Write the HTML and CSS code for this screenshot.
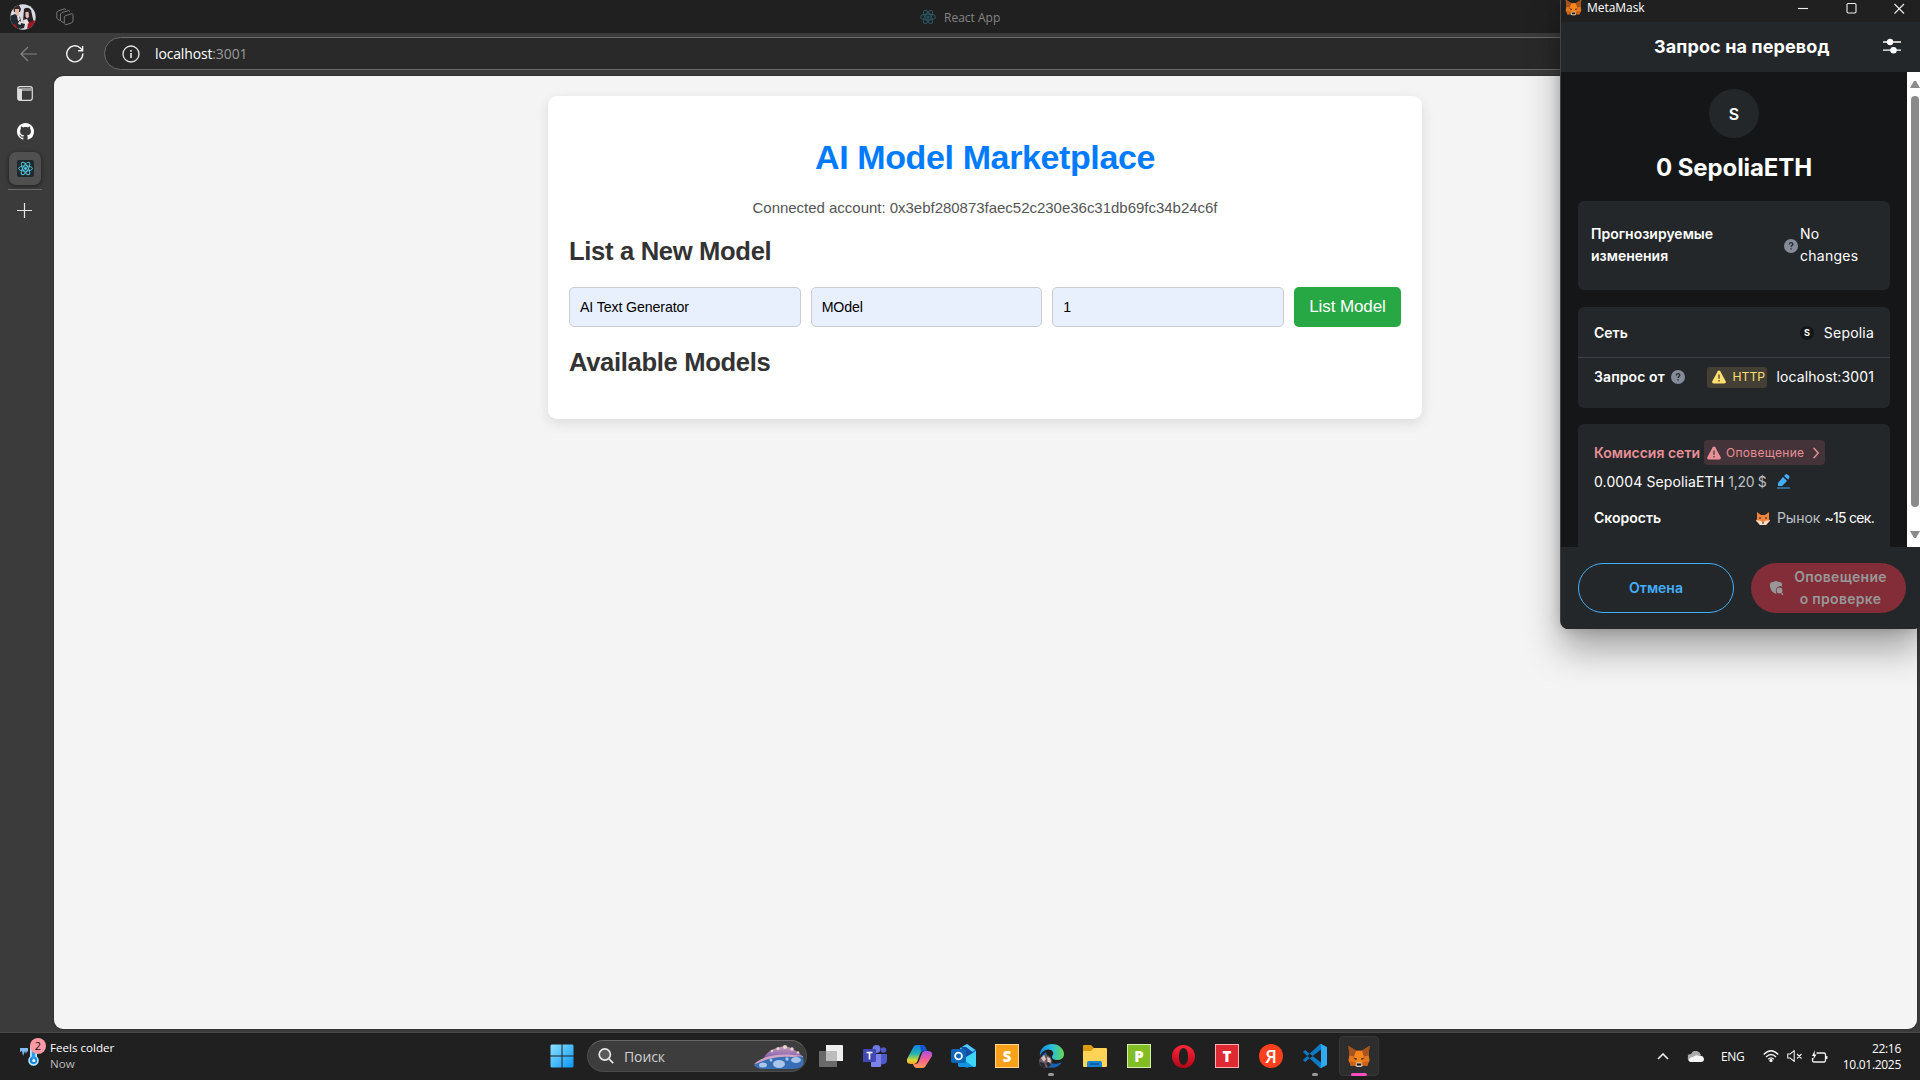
FILE: index.html
```html
<!DOCTYPE html>
<html lang="ru">
<head>
<meta charset="utf-8">
<title>React App</title>
<link rel="stylesheet" href="styles.css">
</head>
<body>
<svg class="defs" width="0" height="0">
  <symbol id="react" viewBox="0 0 24 24">
    <g fill="none" stroke="currentColor" stroke-width="1.6"><ellipse cx="12" cy="12" rx="11" ry="4.3"/><ellipse cx="12" cy="12" rx="11" ry="4.3" transform="rotate(60 12 12)"/><ellipse cx="12" cy="12" rx="11" ry="4.3" transform="rotate(120 12 12)"/></g><circle cx="12" cy="12" r="2.3" fill="currentColor"/>
  </symbol>
  <symbol id="fox" viewBox="0 0 24 24">
    <path d="M1 1l8 5h6l8-5-1 9 1 6-2.500 6-5-1-2 2h-3l-2-2-5 1L1 16l1-6z" fill="#e4761b"/>
    <path d="M1 1l8 5-2 6-5-1zM23 1l-8 5 2 6 5-1z" fill="#a8531f"/>
    <path d="M9 6h6l2 6-2 7H9l-2-7z" fill="#f6851b"/>
    <path d="M6 13l4 1-1 2zM18 13l-4 1 1 2z" fill="#3a2a33"/>
    <path d="M3.500 22L2 17l6 1 1.500 3zM20.500 22l1.500-5-6 1-1.500 3z" fill="#cd6116"/>
    <path d="M9 19l1-1h4l1 1 1 3-2 1h-4l-2-1z" fill="#d7c1b3"/>
    <path d="M9.500 19.200h5l-.5 2.300h-4z" fill="#161616"/>
  </symbol>
  <symbol id="help" viewBox="0 0 14 14"><circle cx="7" cy="7" r="7" fill="#858b98"/><path d="M5.300 5.500c0-2.500 3.500-2.300 3.500-.3 0 1.300-1.700 1.300-1.700 2.700M7.100 9.300v1.300" fill="none" stroke="#24272a" stroke-width="1.300"/></symbol>
  <symbol id="warn" viewBox="0 0 14 14"><path d="M7 .5c.6 0 1 .3 1.300.8l5.400 10c.5 1-.1 2.200-1.300 2.200H1.600C.4 13.500-.2 12.300.3 11.300l5.400-10C6 .8 6.400.5 7 .5z" fill="currentColor"/><path d="M7 4.500v4.300M7 10v1.500" stroke="#433f35" stroke-width="1.300"/></symbol>
</svg>

<div class="desktop">
  <div class="browser">
    <header class="titlebar">
      <svg class="avatar" viewBox="0 0 26 26"><defs><clipPath id="av"><circle cx="13" cy="13" r="12.700"/></clipPath></defs><g clip-path="url(#av)"><path fill="#d9dbe3" d="M0 0h26v26H0z"/><path fill="#212a30" d="M0 12l5-2 5 3 2 9-4 4H0z"/><path fill="#33282a" d="M3 2l6-1 2 4-1 3-6 0z"/><path fill="#e3b6a5" d="M5 5l4 0v5L7 12 5 9z"/><path fill="#2a2126" d="M14 5q4-3 7 1l2 9 2 5-5 0-7-3z"/><path fill="#e6bfb5" d="M15.500 8l3 0 .5 5-2 1.500-1.500-2z"/><path fill="#a51522" d="M0 21l5-1 4 6H0zM18 19l8-3v10h-9z"/><path fill="#f0dfe0" d="M7 12l2-1 1 5-2 1zM13 16l4-1 2 4-4 2zM9 17l3 1-1 3-3-1z"/><path fill="#23282c" d="M11 19l4 1-1 4-4 1z"/></g></svg>
      <svg class="workspaces" viewBox="0 0 18 18" fill="none" stroke="#777" stroke-width="1"><path d="M8.800 8l7.400-2.500.8 1v6.500L15.500 15 9.500 16.800 8.300 15.500V8.700zM7.800 14.500L6 14 4.500 12.500V6L6 4.500 12.500 2.500l1.500 1M4.500 12.500L2 11.500.8 10V4.200L2 3 8.500.8l1.500.7"/></svg>
      <div class="window-title"><svg class="tab-react"><use href="#react"/></svg><span>React App</span></div>
    </header>
    <div class="toolbar">
      <svg class="back" viewBox="0 0 18 16" fill="none" stroke="#838383" stroke-width="1.200"><path d="M17 8H1.200M8 1L1 8l7 7"/></svg>
      <svg class="reload" viewBox="0 0 18 18" fill="none" stroke="#f4f4f4" stroke-width="1.400"><path d="M16.800 8.500A8 8 0 1 1 14.500 3.200L16.300 5M16.600 1v4.700h-4.500"/></svg>
      <div class="address">
        <svg viewBox="0 0 18 18" fill="none" stroke="#e8e8e8" stroke-width="1.300"><circle cx="9" cy="9" r="8"/><path d="M9 8v5M9 5v1.700" stroke-width="1.600"/></svg>
        <div class="url">localhost<span>:3001</span></div>
      </div>
    </div>
    <div class="content-row">
      <nav class="vertical-tabs">
        <svg class="panel-icon" viewBox="0 0 16 15"><rect x=".7" y=".7" width="14.600" height="13.600" rx="2.200" fill="none" stroke="#ddd" stroke-width="1.200"/><path d="M1 2.500h14V5H5v9H2L1 13z" fill="#ddd"/><path d="M5 2h10v3H5z" fill="#999"/></svg>
        <svg class="github" viewBox="0 0 16 16" fill="#fff"><path d="M8 0C3.580 0 0 3.580 0 8c0 3.540 2.290 6.530 5.470 7.590.4.070.55-.17.55-.38 0-.19-.01-.82-.01-1.490-2.010.37-2.530-.49-2.690-.94-.09-.23-.48-.94-.82-1.130-.28-.15-.68-.52-.01-.53.63-.01 1.080.58 1.230.82.72 1.210 1.870.87 2.330.66.07-.52.28-.87.51-1.070-1.780-.2-3.640-.89-3.640-3.950 0-.87.31-1.590.82-2.150-.08-.2-.36-1.020.08-2.120 0 0 .67-.21 2.200.82.64-.18 1.320-.27 2-.27s1.360.09 2 .27c1.530-1.040 2.200-.82 2.200-.82.44 1.100.16 1.920.08 2.120.51.56.82 1.270.82 2.150 0 3.070-1.870 3.750-3.650 3.950.29.25.54.73.54 1.480 0 1.070-.01 1.930-.01 2.200 0 .21.15.46.55.38A8.010 8.010 0 0 0 16 8c0-4.420-3.580-8-8-8z"/></svg>
        <div class="active-tab"><svg><use href="#react"/></svg></div>
        <div class="tab-divider"></div>
        <svg class="plus" viewBox="0 0 15 15" stroke="#e5e5e5" stroke-width="1.200"><path d="M7.500 0v15M0 7.500h15"/></svg>
      </nav>
      <main class="page">
        <section class="market">
          <h1>AI Model Marketplace</h1>
          <p class="account">Connected account: 0x3ebf280873faec52c230e36c31db69fc34b24c6f</p>
          <h2 class="new-title">List a New Model</h2>
          <form class="model-form">
            <input type="text" value="AI Text Generator"><input type="text" value="MOdel"><input type="text" value="1">
            <button type="button">List Model</button>
          </form>
          <h2 class="available-title">Available Models</h2>
        </section>
      </main>
    </div>
  </div>

  <footer class="taskbar">
    <div class="weather">
      <div class="weather-icon">
        <svg viewBox="0 0 22 20"><path d="M0 2h8v4L7 5 6 8 5 5 3 10 2 5 0 6z" fill="#83bbee"/><path d="M10 0h7v10.500a5.300 5.300 0 1 1-7 0z" fill="#b9e6ff"/><circle cx="13.500" cy="14.200" r="3.700" fill="#1586df"/><path d="M11.800 0h3.400v13h-3.400z" fill="#2d9eea"/><circle cx="13.800" cy="14.500" r="1.500" fill="#fff"/></svg>
        <span class="count">2</span>
      </div>
      <div class="weather-text"><span>Feels colder</span><span class="muted">Now</span></div>
    </div>
    <div class="task"><svg width="24" height="24" viewBox="0 0 24 24"><defs><linearGradient id="win" x2="1" y2="1"><stop stop-color="#8ce2ff"/><stop offset="1" stop-color="#0996f6"/></linearGradient></defs><path fill="url(#win)" d="M1.500.5H11.500v11H.5V1.500zM12.500.5h10l1 1v10h-11zM.5 12.500h11v11h-10l-1-1zM12.500 12.500h11v10l-1 1h-10z"/></svg></div>
    <div class="search">
      <svg class="lens" viewBox="0 0 16 16" fill="none" stroke="#e6e6e6" stroke-width="1.700"><circle cx="6.800" cy="6.500" r="5.600" fill="#5a5a5a"/><path d="M11 10.800l4.200 4.300"/></svg>
      <span>Поиск</span>
      <svg class="shell" viewBox="0 0 50 24"><defs><linearGradient id="sh" x2="0" y2="1"><stop stop-color="#c79cba"/><stop offset=".45" stop-color="#8765ae"/><stop offset="1" stop-color="#3475c0"/></linearGradient></defs><path d="M0 20C3 17 5 15 9 14 12 9 16 4 24 3c6-3 13-1 18 3 6 3 9 9 7 14-2 4-11 4-17 4H11C6 24 2 23 0 20z" fill="url(#sh)"/><path d="M0 19C9 11 24 7 49 11l0 2-20 0z" fill="#d3a3c3"/><path d="M1 20c9-6 23-9 36-8 5 0 9-1 12 0 1 6-1 12-12 12H11z" fill="#376fb7"/><g fill="#a9c5ea"><ellipse cx="25" cy="19" rx="6" ry="4"/><ellipse cx="42" cy="15" rx="5" ry="3"/><ellipse cx="9" cy="20" rx="4" ry="2.500"/><circle cx="17" cy="15" r="1.500"/><circle cx="33" cy="14" r="1.700"/></g><g fill="#ead6cc"><circle cx="24" cy="3.500" r="1.600"/><circle cx="31" cy="2" r="2"/><circle cx="38" cy="4" r="1.700"/><circle cx="44" cy="7.500" r="1.300"/><circle cx="18" cy="6" r="1.200"/></g></svg>
    </div>
    <div class="task first"><svg width="24" height="22" viewBox="0 0 24 22"><path fill="#eee" d="M7 0h16q1 0 1 1v15H7z"/><path fill="#777" fill-opacity=".85" d="M0 6h18v16H1q-1 0-1-1z"/><path fill="#bcbcbc" d="M7 6h11v10H7z"/></svg></div>
    <div class="task"><svg width="24" height="22" viewBox="0 0 24 22"><circle cx="13.500" cy="4" r="4" fill="#7078e2"/><circle cx="20.500" cy="5" r="2.800" fill="#5059c9"/><path fill="#7b83eb" d="M8 9h10v8a5 5 0 0 1-10 4z"/><path fill="#5059c9" d="M18 9h6v6q0 5-6 4z"/><rect y="4" width="13" height="13" rx="1" fill="#4148b4"/><path d="M3.500 7.500h6M6.500 7.500v7" stroke="#fff" stroke-width="1.700"/></svg></div>
    <div class="task"><svg width="25" height="23" viewBox="0 0 25 23"><defs><linearGradient id="co1" x2="0" y2="1"><stop stop-color="#1680e9"/><stop offset=".45" stop-color="#20b4ae"/><stop offset=".8" stop-color="#d8d830"/><stop offset="1" stop-color="#ff9d29"/></linearGradient><linearGradient id="co2" x2="0" y2="1"><stop stop-color="#ab50e5"/><stop offset=".5" stop-color="#f35d91"/><stop offset="1" stop-color="#ff9b54"/></linearGradient></defs><path fill="url(#co1)" d="M7 1q1-1 3-1h5q3 0 4 4l1 2h-4q-2 0-3 3l-3 8q-1 2-3 2H4q-5 0-4-5z"/><path fill="url(#co2)" d="M18 22q-1 1-3 1h-5q-3 0-4-4h3q2 0 3-3l3-8q1-2 3-2h3q5 0 4 5z"/><path fill="#1954cf" d="M13 0h2q3 0 4 4l1 2h-4q-1 0-2 1z"/></svg></div>
    <div class="task"><svg width="25" height="24" viewBox="0 0 25 24"><path fill="#1a6fc8" d="M7 6l9-6 9 6v14l-9 4-9-4z"/><path fill="#50ccf5" d="M9 4l7-4 8 6-11 8z"/><path fill="#124da1" d="M10 3l5 0 8 6-8 5z"/><path fill="#3ed5f8" d="M25 7v15q0 1-2 1H8l-1-5z"/><path fill="#1693e0" d="M7 12l16 11H9q-2 0-2-2z"/><rect y="5" width="15" height="14" rx="2" fill="#0f65b8"/><circle cx="7.500" cy="12" r="3.400" fill="none" stroke="#fff" stroke-width="1.800"/></svg></div>
    <div class="task"><span class="tile orange">S</span></div>
    <div class="task running"><svg width="26" height="24" viewBox="0 0 26 24"><defs><linearGradient id="ed" x2="1"><stop stop-color="#1686d4"/><stop offset=".5" stop-color="#27bddf"/><stop offset="1" stop-color="#67d950"/></linearGradient></defs><path d="M2 13C1 5 7 0 14 0c7 0 12 5 12 10 0 4-3 6-7 6-3 0-5-1-5-3 0-2 2-2 1-5-3-5-12-2-13 5z" fill="url(#ed)"/><path d="M9 11c-1 8 7 11 15 7-4 7-15 8-20 1C2 16 3 11 8 8z" fill="#1766b5"/><circle cx="7.500" cy="17.500" r="6.500" fill="#6d5a62"/><path d="M3 14l3-3 2 4-2 3zM9 13l3 1 1 4-3 2z" fill="#d8c2c3"/><path d="M1 18l5 1 2 5-4-1zM8 19l3-1 2 3-3 2z" fill="#232a30"/></svg></div>
    <div class="task"><svg width="24" height="22" viewBox="0 0 24 22"><path fill="#dc9c12" d="M0 1q0-1 1-1h7l3 3h12v4H0z"/><path fill="#ffd456" d="M0 6h8l3-3h12q1 0 1 1v17q0 1-1 1H1q-1 0-1-1z"/><path fill="#1881d1" d="M4 22v-4q0-2 2-2h11q2 0 2 2v4z"/><path d="M7 19h9" stroke="#0f599c" stroke-width="1.500"/></svg></div>
    <div class="task"><span class="tile green">P</span></div>
    <div class="task"><svg width="23" height="23" viewBox="0 0 23 23"><defs><linearGradient id="op" x2="0" y2="1"><stop stop-color="#ff2639"/><stop offset="1" stop-color="#b40518"/></linearGradient></defs><path fill-rule="evenodd" fill="url(#op)" d="M11.500 0a11.500 11.500 0 1 0 0 23 11.500 11.500 0 0 0 0-23zm0 3c3 0 4.500 4 4.500 8.500S14.500 20 11.500 20 7 16 7 11.500 8.500 3 11.500 3z"/></svg></div>
    <div class="task"><span class="tile red">T</span></div>
    <div class="task"><span class="yandex">Я</span></div>
    <div class="task running"><svg width="24" height="24" viewBox="0 0 24 24"><path d="M0 8l2-2 16 12.500V24h-1z M0 16l2 2L18 5.500V0h-1z" fill="#0b7bc4"/><path d="M17 0h1l6 3v18l-6 3h-1l1-1V1z" fill="#31a9f3"/></svg></div>
    <div class="task current"><svg width="24" height="23"><use href="#fox"/></svg></div>
    <div class="tray">
      <svg class="chevron" viewBox="0 0 12 7" fill="none" stroke="#eee" stroke-width="1.600"><path d="M1 6l5-5 5 5"/></svg>
      <svg class="cloud" viewBox="0 0 17 11"><path d="M1 6Q0 3 4 3q2-4 6-3 3 1 4 4l-7 6H3Q0 10 1 6z" fill="#aaa"/><path d="M3 11q-2-1-1-3 1-2 4-2 3-3 6-1 4-1 5 3 0 3-3 3z" fill="#f5f5f5"/></svg>
      <span class="lang">ENG</span>
      <svg class="wifi" viewBox="0 0 16 12" fill="none" stroke="#f0f0f0" stroke-width="1.300"><path d="M.7 4.500q7.300-7.500 14.600 0M3 7q5-5 10 0M5.200 9.200q2.800-2.600 5.600 0"/><circle cx="8" cy="10.500" r="1" fill="#fff"/></svg>
      <svg class="sound" viewBox="0 0 16 12" fill="none" stroke="#eee" stroke-width="1.100"><path d="M.7 4h2.500l4-3.300v10.600L3.200 8H.7zM10 4l4.500 4.500M14.500 4L10 8.500"/></svg>
      <svg class="battery" viewBox="0 0 17 13" fill="none" stroke="#eee" stroke-width="1.300"><path d="M5.500 3H13q1.500 0 1.500 1.500v5Q14.500 12 13 12H3q-1.500 0-1.500-1.500V8M15.800 6v3"/><path d="M4 0L1 6h2L2 10l3.500-5.500h-2z" fill="#fff" stroke="none"/></svg>
      <div class="clock"><span>22:16</span><span>10.01.2025</span></div>
    </div>
  </footer>

  <aside class="wallet">
    <div class="wallet-bar">
      <svg class="app-icon"><use href="#fox"/></svg><span>MetaMask</span>
      <svg class="controls" viewBox="0 0 108 12" fill="none" stroke="#eee" stroke-width="1.100"><path d="M0 6.500h10"/><rect x="49" y="1.500" width="9" height="9.500" rx="1.200"/><path d="M96.500 2l9.500 9.500M106 2L96.500 11.500"/></svg>
    </div>
    <div class="wallet-head"><h3>Запрос на перевод</h3><svg viewBox="0 0 18 16" stroke="#fff" stroke-width="1.300" fill="#fff"><path d="M0 4h18M0 12.200h18"/><circle cx="7" cy="4" r="2.600"/><circle cx="10.500" cy="12.200" r="2.600"/></svg></div>
    <div class="wallet-body">
      <div class="wallet-scroll">
        <div class="token">S</div>
        <div class="amount">0 SepoliaETH</div>
        <section class="panel forecast">
          <div class="label">Прогнозируемые<br>изменения</div>
          <svg class="q"><use href="#help"/></svg>
          <div class="value">No<br>changes</div>
        </section>
        <section class="panel network">
          <div class="row net-row"><span class="label">Сеть</span><span class="mini">S</span><span class="value sepolia">Sepolia</span></div>
          <div class="row from-row"><span class="label">Запрос от</span><svg class="q"><use href="#help"/></svg><span class="http"><svg><use href="#warn"/></svg><span>HTTP</span></span><span class="value host">localhost:3001</span></div>
        </section>
        <section class="panel fee">
          <div class="row fee-row"><span class="label">Комиссия сети</span><span class="alert"><svg class="tri"><use href="#warn"/></svg><span>Оповещение</span><svg class="next" viewBox="0 0 6 12" fill="none" stroke="currentColor" stroke-width="1.400"><path d="M.5.7L5.200 6 .5 11.300"/></svg></span></div>
          <div class="row cost-row"><span class="value eth">0.0004 SepoliaETH</span><span class="fiat">1,20 $</span><svg class="edit" viewBox="0 0 13 15"><path d="M1 9l5-6 4 4-5 5H1zM7 2l2-2q2 0 3.500 2.500 0 2-1.500 3z" fill="#43aefc"/><path d="M0 14h13" stroke="#43aefc" opacity=".6" stroke-width="1.600"/></svg></div>
          <div class="row speed-row"><span class="label">Скорость</span><svg class="fox-face" viewBox="0 0 14 13"><path d="M1 0l4 3h4l4-3 0 7 1 2-4 4H4L0 9l1-2z" fill="#f3823a"/><path d="M0 8l5 1 2 2 2-2 5-1-4 5H4z" fill="#f7dfc9"/><path d="M4 5v2M10 5v2M6 11h2" stroke="#47332b" stroke-width="1.200"/></svg><span class="market-speed">Рынок</span><span class="value sec">~15 сек.</span></div>
        </section>
      </div>
      <div class="scrollbar"><svg viewBox="0 0 10 8"><path d="M0 8l4-7h2l4 7z" fill="#8b8b8b"/></svg><div class="thumb"></div><svg viewBox="0 0 10 8"><path d="M0 0h10L6 7H4z" fill="#8b8b8b"/></svg></div>
    </div>
    <div class="wallet-actions">
      <button class="cancel">Отмена</button>
      <button class="review"><svg viewBox="0 0 14 14" fill="#989898"><path d="M6 0l5 1.500q1 .5 1 1.500v2.500a4.500 4.500 0 0 0-5.500 6.500l-.5 1Q0 10 0 5V3q0-1 1-1.500z"/><circle cx="9.500" cy="9.500" r="2.900"/><path d="M11.500 12l1.500 1.800" stroke="#989898" stroke-width="1.300"/></svg><span>Оповещение<br>о проверке</span></button>
    </div>
  </aside>
</div>
</body>
</html>
```
FILE: styles.css
```css
* { box-sizing: border-box; }
body { margin: 0; background: #202020; overflow: hidden; font-family: "Open Sans", "Noto Sans", sans-serif; }
svg { display: block; flex: none; }
.defs { position: absolute; }
.desktop { position: relative; width: 1920px; height: 1080px; display: flex; flex-direction: column; overflow: hidden; }

/* browser window */
.browser { height: 1033px; display: flex; flex-direction: column; background: #3b3b3b; border-bottom: 1px solid #484848; }
.titlebar { height: 33px; flex: none; background: #202020; display: flex; align-items: center; padding-left: 10px; }
.avatar { width: 26px; height: 26px; }
.workspaces { width: 18px; height: 18px; margin-left: 20px; }
.window-title { margin-left: 846px; display: flex; align-items: center; gap: 8px; color: #858585; font-size: 12px; line-height: 16px; padding-top: 2px; }
.window-title svg { width: 16px; height: 16px; color: #2b5562; margin-top: -2px; }
.toolbar { height: 43px; flex: none; display: flex; align-items: center; padding: 0 0 2px 20px; }
.back { width: 18px; height: 16px; }
.reload { width: 18px; height: 18px; margin-left: 28px; }
.address { margin-left: 20px; height: 33px; width: 1830px; border: 1px solid #6a6a6a; border-radius: 17px; background: #292929; display: flex; align-items: center; padding-left: 17px; gap: 15px; }
.address svg { width: 18px; height: 18px; }
.url { color: #fff; font-size: 14px; letter-spacing: -.15px; line-height: 20px; }
.url span { color: #9a9a9a; letter-spacing: -.1px; }
.content-row { flex: 1; display: flex; padding: 0 3px 3px 0; }
.vertical-tabs { width: 54px; display: flex; flex-direction: column; align-items: center; padding-right: 4px; }
.panel-icon { width: 16px; height: 15px; margin-top: 10px; }
.github { width: 17px; height: 17px; margin-top: 22px; }
.active-tab { width: 32px; height: 33px; margin-top: 12px; background: #505050; border-radius: 7px; box-shadow: 0 1px 4px rgba(0,0,0,.55); display: flex; align-items: center; justify-content: center; }
.active-tab svg { width: 17px; height: 17px; padding: 1px; background: #20282b; border-radius: 2px; color: #51c7e2; }
.tab-divider { width: 34px; height: 1px; margin-top: 4px; background: #6a6a6a; }
.plus { width: 15px; height: 15px; margin: 13px 2px 0 0; }
.page { flex: 1; background: #f4f4f4; border-radius: 9px; padding: 20px 0 0 494px; box-shadow: 0 0 2px #222; }

/* marketplace */
.market { width: 874px; height: 323px; background: #fff; border-radius: 9px; padding: 39px 21px 0; display: flex; flex-direction: column; box-shadow: 0 4px 13px rgba(0,0,0,.1); font-family: "Liberation Sans", Arial, sans-serif; }
.market h1 { margin: 0; text-align: center; color: #007bff; font-size: 34px; line-height: 44px; letter-spacing: -.38px; }
.account { margin: 17px 0 0; text-align: center; color: #555; font-size: 15px; line-height: 24px; letter-spacing: -.02px; }
.market h2 { margin: 0; color: #333; font-size: 25.600px; line-height: 34px; letter-spacing: -.33px; }
.market .new-title { margin-top: 14px; }
.model-form { display: grid; grid-template-columns: 1fr 1fr 1fr 107px; gap: 10px; margin-top: 19px; height: 40px; }
.model-form input { min-width: 0; border: 1px solid #ccc; border-radius: 5px; background: #e8f0fe; padding: 0 10px; font: 14.200px "Liberation Sans", Arial, sans-serif; letter-spacing: -.12px; color: #000; }
.model-form button { border: 0; border-radius: 5px; background: #28a745; color: #fff; font: 17px "Liberation Sans", Arial, sans-serif; letter-spacing: -.1px; padding: 0; white-space: nowrap; }
.market .available-title { margin-top: 18px; }

/* taskbar */
.taskbar { height: 47px; background: #202020; display: flex; align-items: center; color: #fff; font-size: 12px; padding-bottom: 1px; }
.weather { width: 540px; height: 46px; flex: none; display: flex; padding: 5px 0 0 20px; }
.weather-icon { position: relative; width: 30px; }
.weather-icon svg { width: 22px; height: 20px; margin-top: 8px; }
.count { position: absolute; left: 10px; top: 0; width: 16px; height: 16px; border-radius: 50%; background: #ff99a4; color: #111; font-size: 11px; line-height: 16px; text-align: center; }
.weather-text { display: flex; flex-direction: column; line-height: 16px; padding-top: 2px; font-size: 11.600px; }
.muted { color: #bbb; }
.task { width: 44px; height: 46px; flex: none; display: flex; align-items: center; justify-content: center; position: relative; }
.task.first { margin-left: 2px; }
.search { margin-left: 3px; width: 220px; height: 32px; flex: none; border-radius: 16px; background: #3d3d3d; border: 1px solid #4a4a4a; border-top-color: #666; display: flex; align-items: center; padding: 0 2px 0 10px; font-size: 14px; color: #d0d0d0; overflow: hidden; }
.search span { margin-left: 10px; letter-spacing: -.1px; }
.lens { width: 16px; height: 16px; }
.shell { width: 50px; height: 24px; margin: 2px 0 0 auto; }
.tile { width: 24px; height: 24px; display: flex; align-items: center; justify-content: center; font-weight: 800; font-size: 15px; border: 1px solid; }
.orange { background: #f9a11b; border-color: #ffd691; }
.green { background: #82bd23; border-color: #d5edab; }
.red { background: #df2933; border-color: #ffafad; }
.yandex { width: 24px; height: 24px; border-radius: 50%; background: #fc3f1d; display: flex; align-items: center; justify-content: center; font-size: 18px; font-weight: 600; }
.running::after, .current::after { content: ""; position: absolute; bottom: 3px; left: 19px; width: 6px; height: 3px; border-radius: 2px; background: #999; }
.current::before { content: ""; position: absolute; inset: 3px 2px; border: 1px solid #383838; background: #2d2d2d; border-radius: 4px; }
.current svg { position: relative; }
.current::after { width: 16px; left: 14px; background: #ff4fc3; }
.tray { margin-left: auto; display: flex; align-items: center; padding-right: 19px; }
.chevron { width: 12px; height: 7px; }
.cloud { width: 17px; height: 11px; margin-left: 18px; }
.lang { width: 24px; margin-left: 17px; padding-top: 1px; font-size: 12px; letter-spacing: -.3px; }
.wifi { width: 16px; height: 12px; margin-left: 18px; }
.sound { width: 16px; height: 12px; margin-left: 8px; }
.battery { width: 17px; height: 13px; margin-left: 8px; }
.clock { width: 73px; display: flex; flex-direction: column; align-items: flex-end; line-height: 16px; font-size: 12px; letter-spacing: -.3px; padding-top: 1px; }

/* wallet pop-up */
.wallet { position: absolute; left: 1561px; top: 0; width: 360px; height: 629px; background: #141618; border-radius: 0 0 8px 8px; overflow: visible; display: flex; flex-direction: column; box-shadow: 0 20px 36px rgba(0,0,0,.34), 0 0 14px rgba(0,0,0,.18), -1px 0 0 #555; color: #fff; font-family: Inter, Roboto, sans-serif; font-size: 14px; }
.wallet-bar { height: 22px; background: #202020; display: flex; align-items: flex-start; font: 12px/16px "Open Sans", sans-serif; letter-spacing: -.05px; }
.app-icon { width: 17px; height: 17px; margin: -1px 5px 0 4px; }
.controls { width: 108px; height: 12px; margin: 2px 15px 0 auto; }
.wallet-head { height: 50px; background: #24272a; display: flex; align-items: center; padding: 0 0 2px 93px; }
.wallet-head h3 { margin: 0; width: 176px; font-size: 18px; font-weight: 700; letter-spacing: .12px; white-space: nowrap; }
.wallet-head svg { width: 18px; height: 16px; margin-left: 53px; }
.wallet-body { height: 475px; display: flex; overflow: hidden; }
.wallet-scroll { width: 346px; padding: 17px 17px 0; display: flex; flex-direction: column; align-items: center; }
.token { width: 50px; height: 49px; border-radius: 50%; background: #24272a; display: flex; align-items: center; justify-content: center; font-size: 16px; font-weight: 600; flex: none; }
.amount { margin-top: 14px; height: 32px; line-height: 32px; font-size: 24px; font-weight: 700; letter-spacing: -.1px; white-space: nowrap; }
.panel { width: 312px; flex: none; background: #24272a; border-radius: 6px; line-height: 22px; white-space: nowrap; }
.label { font-weight: 600; }
.q { width: 14px; height: 14px; }
.forecast { height: 89px; margin-top: 17px; padding: 0 32px 2px 13px; display: flex; align-items: center; }
.forecast .q { margin: 2px 2px 0 auto; }
.forecast .value { width: 58px; letter-spacing: .25px; }
.network { margin-top: 17px; height: 101px; }
.row { display: flex; align-items: center; padding: 0 16px; }
.net-row { height: 51px; border-bottom: 1px solid #3b4046; padding-top: 2px; }
.mini { width: 14px; height: 14px; margin: 0 10px 0 auto; background: #141618; border-radius: 50%; font-size: 9px; line-height: 14px; text-align: center; font-weight: 700; }
.sepolia { letter-spacing: .2px; }
.from-row { height: 38px; }
.from-row .label { letter-spacing: .1px; }
.from-row .q { margin-left: 6px; }
.http { margin-left: auto; width: 60px; height: 21px; border-radius: 3px; background: #433f35; color: #ffdf70; display: flex; align-items: center; gap: 6px; padding-left: 5px; font-size: 12.200px; }
.http svg, .tri { width: 14px; height: 14px; }
.host { margin-left: 9px; letter-spacing: .12px; }
.fee { height: 140px; margin-top: 16px; padding-top: 16px; }
.fee-row { height: 25px; color: #e88f97; }
.alert { margin-left: 4px; width: 121px; height: 25px; border-radius: 4px; background: #443338; display: flex; align-items: center; padding-left: 3px; font-size: 12px; }
.alert > span { width: 79px; margin-left: 5px; letter-spacing: .3px; }
.next { width: 6px; height: 12px; margin-left: 8px; }
.cost-row { height: 33px; }
.eth { letter-spacing: .12px; }
.fiat { color: #bbc0c5; margin-left: 4px; letter-spacing: -.3px; }
.edit { width: 13px; height: 15px; margin-left: 10px; }
.speed-row { height: 40px; }
.fox-face { width: 14px; height: 13px; margin-left: auto; }
.market-speed { margin: 0 4px 0 7px; color: #bbc0c5; }
.sec { letter-spacing: -.7px; }
.scrollbar { width: 14px; background: #fff; display: flex; flex-direction: column; align-items: center; padding: 8px 0 8px 2px; }
.scrollbar svg { width: 10px; height: 8px; }
.thumb { width: 8px; height: 411px; margin: 8px 0 24px; background: #8b8b8b; border-radius: 4px; }
.wallet-actions { height: 82px; background: #24272a; border-radius: 0 0 8px 8px; padding: 16px 15px 16px 17px; display: flex; justify-content: space-between; }
.wallet-actions button { width: 156px; height: 50px; border-radius: 25px; font: 600 14px/22px Inter, Roboto, sans-serif; padding: 0; }
.cancel { background: transparent; border: 1px solid #43aefc; color: #43aefc; }
.wallet-actions .review { width: 155px; letter-spacing: .28px; background: #822d37; border: 0; color: #989898; display: flex; align-items: center; justify-content: center; gap: 10px; }
.review svg { width: 14px; height: 14px; }
```
